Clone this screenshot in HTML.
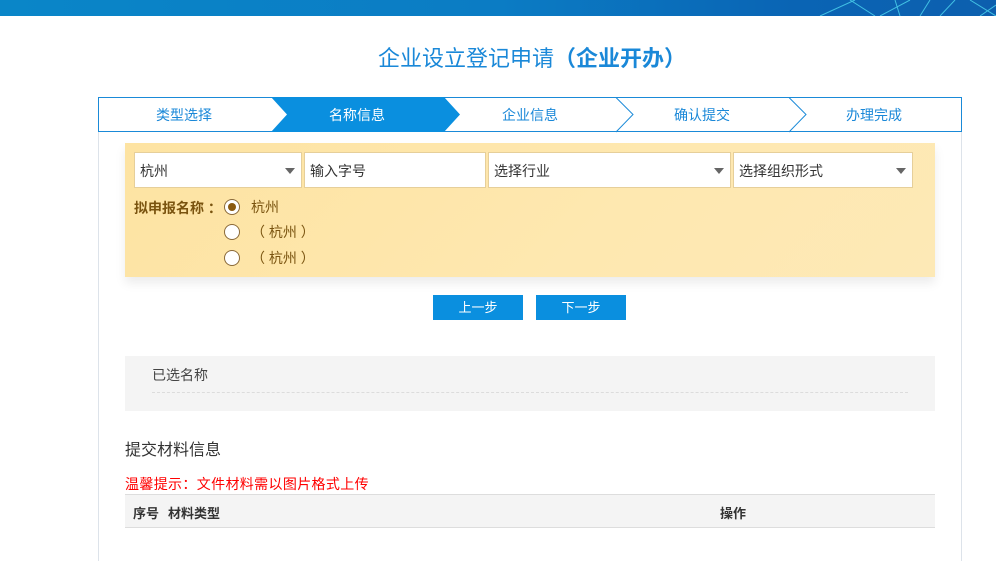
<!DOCTYPE html>
<html><head><meta charset="utf-8"><style>
*{margin:0;padding:0;box-sizing:border-box}
body{width:996px;height:552px;overflow:hidden;background:#fff;font-family:"Liberation Sans","Noto Sans CJK SC",sans-serif;position:relative}
.abs{position:absolute}
.banner{left:0;top:0;width:996px;height:16px;background:linear-gradient(90deg,#0a86c8,#0b7cc4 50%,#0a64b4 80%,#0d5fae)}
.title{left:64px;width:936px;top:41px;text-align:center;font-size:22px;color:#1a88d8}
.frame{left:98px;top:131px;width:864px;height:430px;border-left:1px solid #dde3ea;border-right:1px solid #dde3ea}
.yel{left:125px;top:143px;width:810px;height:134px;background:linear-gradient(135deg,#fde3a2,#fee8b0 60%,#fde9b6);box-shadow:0 6px 10px rgba(0,0,0,.08)}
.fld{top:152px;height:36px;background:#fff;border:1px solid #e6cf9a;font-size:14px;color:#333;padding:8px 5px}
.tri{position:absolute;right:6px;top:15px;border:5px solid transparent;border-top:6px solid #666;border-bottom:0}
.lab{font-size:14px;color:#7a5410}
.rad{width:16px;height:16px;border-radius:50%;border:1px solid #8a6a3a;background:#fff}
.btn{top:295px;width:90px;height:25px;background:#0a8fdf;color:#fff;font-size:13px;text-align:center;line-height:25px}
.grey{left:125px;top:356px;width:810px;height:55px;background:#f4f4f4}
</style></head><body>
<div class="abs banner"></div>
<svg class="abs" style="left:780px;top:0" width="216" height="16"><g stroke="#4fd8f0" stroke-width="1" opacity=".8" fill="none"><path d="M40 16L75 0M70 0L95 16M100 16L130 0M150 0L140 16M160 16L175 0M190 0L216 16M200 16L216 5M115 0L120 16"/></g></svg>
<div class="abs title">企业设立登记申请<b>（企业开办）</b></div>
<div class="abs frame"></div>
<svg class="abs" style="left:98px;top:97px" width="864" height="36">
<rect x="0.5" y="0.5" width="863" height="34" fill="#fff" stroke="#1a8ad8"/>
<polygon points="173,0 346,0 362,17.5 346,35 173,35 189,17.5" fill="#0a8fdf"/>
<path d="M518 0.5L535 17.5 518 35M691 0.5L708 17.5 691 35" stroke="#1a8ad8" fill="none"/>
<g font-size="14" text-anchor="middle" fill="#1a88d8"><text x="86" y="23">类型选择</text><text x="259" y="23" fill="#fff">名称信息</text><text x="432" y="23">企业信息</text><text x="604" y="23">确认提交</text><text x="776" y="23">办理完成</text></g>
</svg>
<div class="abs yel"></div>
<div class="abs fld" style="left:134px;width:168px">杭州<span class="tri"></span></div>
<div class="abs fld" style="left:304px;width:182px">输入字号</div>
<div class="abs fld" style="left:488px;width:243px">选择行业<span class="tri"></span></div>
<div class="abs fld" style="left:733px;width:180px">选择组织形式<span class="tri"></span></div>
<div class="abs lab" style="left:134px;top:198px;font-weight:bold">拟申报名称 ：</div>
<div class="abs rad" style="left:224px;top:199px"><div style="width:8px;height:8px;border-radius:50%;background:#8a5a10;margin:3px"></div></div>
<div class="abs lab" style="left:251px;top:197px">杭州</div>
<div class="abs rad" style="left:224px;top:224px"></div>
<div class="abs lab" style="left:251px;top:222px">（ 杭州 ）</div>
<div class="abs rad" style="left:224px;top:250px"></div>
<div class="abs lab" style="left:251px;top:248px">（ 杭州 ）</div>
<div class="abs btn" style="left:433px">上一步</div>
<div class="abs btn" style="left:536px">下一步</div>
<div class="abs grey"><div style="position:absolute;left:27px;top:9px;font-size:14px;color:#444">已选名称</div><div style="position:absolute;left:27px;right:27px;top:36px;border-top:1px dashed #dcdcdc"></div></div>
<div class="abs" style="left:125px;top:436px;font-size:16px;color:#333">提交材料信息</div>
<div class="abs" style="left:125px;top:474px;font-size:14px;color:#f00;letter-spacing:0.35px">温馨提示：文件材料需以图片格式上传</div>
<div class="abs" style="left:125px;top:494px;width:810px;height:34px;background:#f4f4f4;border-top:1px solid #ddd;border-bottom:1px solid #ddd;font-size:13px;font-weight:bold;color:#333"><span style="position:absolute;left:8px;top:8px">序号</span><span style="position:absolute;left:43px;top:8px">材料类型</span><span style="position:absolute;left:595px;top:8px">操作</span></div>
</body></html>
